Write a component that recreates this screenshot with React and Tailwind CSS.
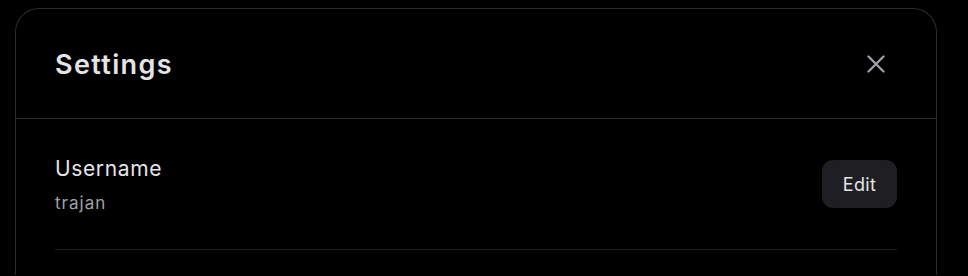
import React from 'react';

const CloseIcon = () => (
  <svg width="18" height="18" viewBox="0 0 18 18" fill="none" stroke="currentColor" strokeWidth="2.2" strokeLinecap="round">
    <path d="M1.5 1.5L16.5 16.5M16.5 1.5L1.5 16.5" />
  </svg>
);

const App = () => {
  return (
    <div className="min-h-screen bg-black pt-2 pl-[15px] font-['Inter',sans-serif]">
      <div className="w-[922px] h-[267px] overflow-hidden rounded-t-[24px] border border-b-0 border-[#2a2a30] bg-black">
        <div className="flex items-center justify-between h-[110px] px-[39px] border-b border-[#2a2a30]">
          <h2 className="mt-[3px] text-[27px] font-semibold tracking-[0.05em] text-[#e4e4e7]">Settings</h2>
          <button className="mr-[12px] text-[#a1a1aa]">
            <CloseIcon />
          </button>
        </div>
        <div className="px-[39px]">
          <div className="flex items-center justify-between h-[131px] border-b border-[#1f1f23]">
            <div className="flex flex-col gap-[16px] pt-[1px]">
              <span className="text-[21px] leading-none tracking-[0.03em] text-[#e4e4e7]">Username</span>
              <span className="text-[17px] leading-none tracking-[0.06em] text-[#a1a1aa]">trajan</span>
            </div>
            <button className="w-[75px] h-[48px] rounded-[11px] bg-[#1f1f23] text-[18px] tracking-[0.02em] text-[#e4e4e7]">Edit</button>
          </div>
        </div>
      </div>
    </div>
  );
};

export default App;
